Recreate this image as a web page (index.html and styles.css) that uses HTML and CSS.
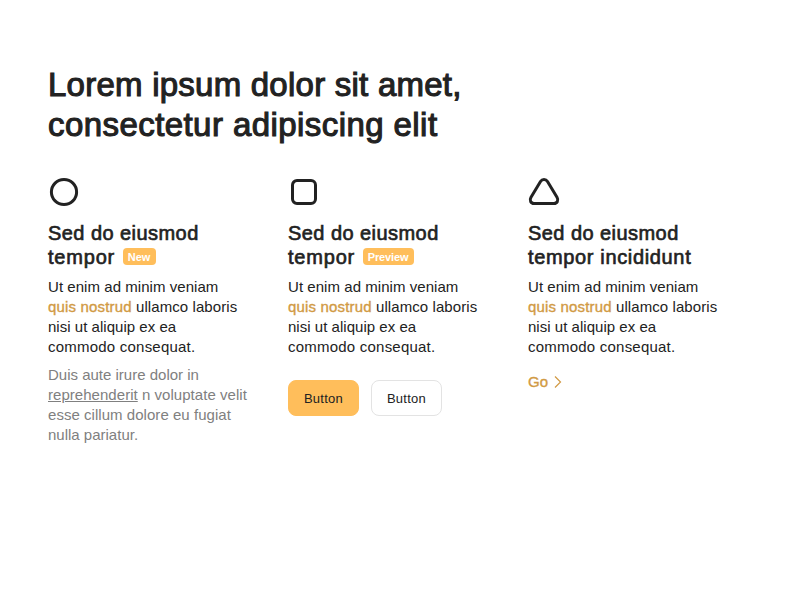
FILE: index.html
```html
<!DOCTYPE html>
<html lang="en">
<head>
<meta charset="utf-8">
<title>Features</title>
<link rel="stylesheet" href="styles.css">
</head>
<body>
<main class="page">
  <h1 class="headline"><span class="l h1a">Lorem ipsum dolor sit amet,</span><span class="l h1b">consectetur adipiscing elit</span></h1>
  <div class="features">
    <section class="feature">
      <svg class="icon" viewBox="0 0 32 32"><circle cx="16" cy="16" r="12.6"/></svg>
      <h2 class="title"><span class="l t1">Sed do eiusmod</span><span class="l t2">tempor</span><span class="badge new">New</span></h2>
      <p class="text"><span class="l p1">Ut enim ad minim veniam</span><span class="l p2"><span class="accent">quis nostrud</span> ullamco laboris</span><span class="l p3">nisi ut aliquip ex ea</span><span class="l p4">commodo consequat.</span></p>
      <p class="text note"><span class="l n1">Duis aute irure dolor in</span><span class="l n2"><a class="link">reprehenderit</a> n voluptate velit</span><span class="l n3">esse cillum dolore eu fugiat</span><span class="l n4">nulla pariatur.</span></p>
    </section>
    <section class="feature">
      <svg class="icon" viewBox="0 0 32 32"><rect x="4.5" y="4.5" width="23" height="23" rx="4.5"/></svg>
      <h2 class="title"><span class="l t1">Sed do eiusmod</span><span class="l t2">tempor</span><span class="badge preview">Preview</span></h2>
      <p class="text"><span class="l p1">Ut enim ad minim veniam</span><span class="l p2"><span class="accent">quis nostrud</span> ullamco laboris</span><span class="l p3">nisi ut aliquip ex ea</span><span class="l p4">commodo consequat.</span></p>
      <div class="actions"><button class="button primary">Button</button><button class="button">Button</button></div>
    </section>
    <section class="feature">
      <svg class="icon" viewBox="0 0 32 32"><path d="M12.5 5.500 3 21.300C1.200 24.300 2.800 27.500 6 27.500h20c3.200 0 4.800-3.200 3-6.200L19.500 5.500c-1.700-2.800-5.300-2.800-7 0Z"/></svg>
      <h2 class="title"><span class="l t1">Sed do eiusmod</span><span class="l t3">tempor incididunt</span></h2>
      <p class="text"><span class="l p1">Ut enim ad minim veniam</span><span class="l p2"><span class="accent">quis nostrud</span> ullamco laboris</span><span class="l p3">nisi ut aliquip ex ea</span><span class="l p4">commodo consequat.</span></p>
      <a class="go"><span>Go</span><svg class="chevron" viewBox="0 0 8 14"><path d="m1 1.5 5.5 5.5L1 12.5"/></svg></a>
    </section>
  </div>
</main>
</body>
</html>
```
FILE: styles.css
```css
body { margin: 0; background: #fff; color: #222; font-family: "Liberation Sans", Arial, sans-serif; }
h1, h2, p { margin: 0; }
.page { padding: 65px 48px 0; }
.l { white-space: nowrap; }
.headline { font-size: 33px; line-height: 40px; font-weight: 400; -webkit-text-stroke: 1.1px #222; }
.headline .l, .text .l, .t1 { display: block; }
.h1a { letter-spacing: 0.24px; }
.h1b { letter-spacing: 0.43px; }
.features { display: grid; grid-template-columns: repeat(3, 200px); column-gap: 40px; margin-top: 31px; }
.icon { display: block; width: 32px; height: 32px; fill: none; stroke: #222; stroke-width: 3; overflow: visible; }
.title { height: 48px; margin-top: 13px; font-size: 20px; line-height: 24px; font-weight: 400; -webkit-text-stroke: 0.65px #222; }
.t1 { letter-spacing: 0.44px; }
.t2 { letter-spacing: 0.8px; }
.t3 { letter-spacing: 0.65px; }
.badge { display: inline-block; box-sizing: border-box; height: 17px; margin-left: 7.5px; border-radius: 4px; background: #ffbe5b; color: #fff; font-size: 11px; line-height: 18px; font-weight: 700; text-align: center; vertical-align: 2.6px; -webkit-text-stroke: 0; }
.new { width: 33px; }
.preview { width: 51px; letter-spacing: -0.15px; }
.text { margin-top: 8px; font-size: 15px; line-height: 20px; }
.p1 { letter-spacing: 0.05px; }
.p2 { letter-spacing: 0.08px; }
.p3 { letter-spacing: 0.03px; }
.p4 { letter-spacing: 0.22px; }
.n2, .n3 { letter-spacing: 0.04px; }
.accent { letter-spacing: 0.17px; color: #d19a44; -webkit-text-stroke: 0.35px #d19a44; }
.note { color: #808080; }
.link { text-decoration: underline; }
.actions { display: flex; gap: 12px; margin-top: 23px; }
.button { box-sizing: border-box; width: 71px; height: 36px; padding: 0; border: 1px solid #e3e3e3; border-radius: 8px; background: #fff; color: #222; font: 13px "Liberation Sans", Arial, sans-serif; letter-spacing: 0.25px; }
.primary { border-color: #ffbe5b; background: #ffbe5b; }
.go { display: flex; align-items: center; gap: 6px; margin-top: 15px; font-size: 15px; line-height: 20px; color: #d19a44; -webkit-text-stroke: 0.35px #d19a44; }
.chevron { width: 8px; height: 14px; fill: none; stroke: #d19a44; stroke-width: 1.2; }
```
